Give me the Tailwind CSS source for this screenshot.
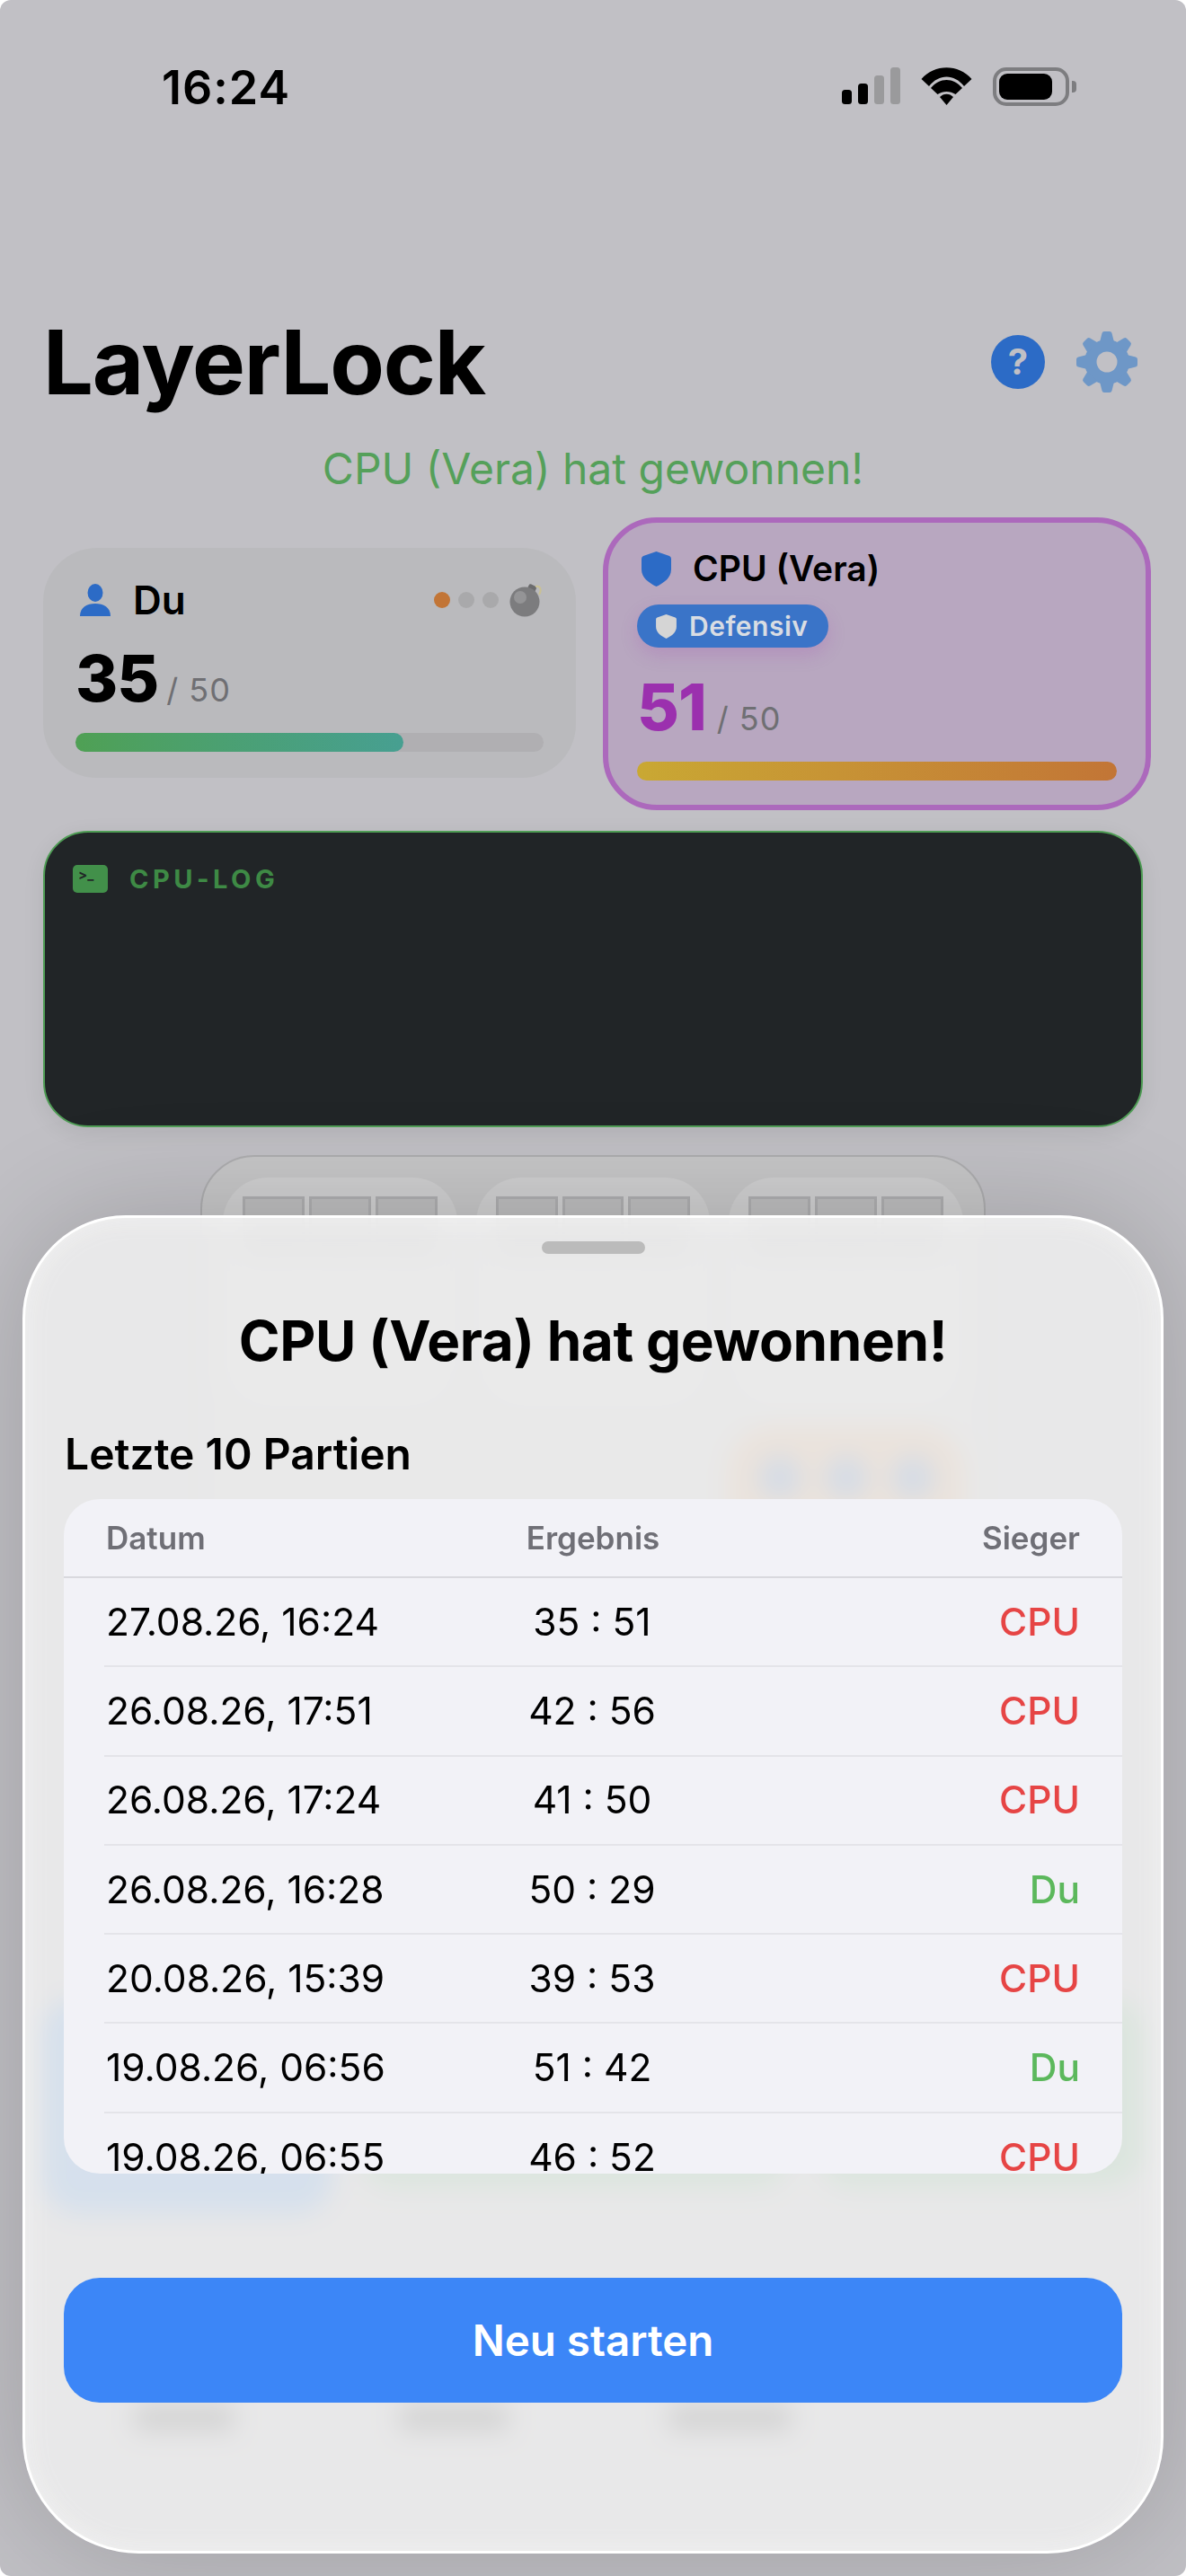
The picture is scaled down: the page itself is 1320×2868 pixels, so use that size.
<!DOCTYPE html>
<html lang="de">
<head>
    <meta charset="UTF-8">
    <meta name="viewport" content="width=device-width, initial-scale=1.0">
    <script src="https://cdn.jsdelivr.net/npm/@tailwindcss/browser@4"></script>
    <title>LayerLock</title>
</head>
<body class="bg-white">
<div class="relative w-[1320px] h-[2868px] overflow-hidden rounded-[12px] bg-[#c1c0c5] text-black [font-family:Inter,sans-serif]">

    <!-- status bar -->
    <div class="flex items-start justify-between pl-[180px] pr-[122px] pt-[72px]">
        <div class="text-[52px] leading-[52px] font-semibold tracking-[1px]">16:24</div>
        <div class="flex items-start gap-[23px] pt-[3px]">
            <svg width="65" height="42" viewBox="0 0 65 42">
                <rect x="0" y="25" width="11" height="16" rx="3.5" fill="#000"/>
                <rect x="18" y="18" width="11" height="23" rx="3.5" fill="#000"/>
                <rect x="36" y="9" width="11" height="32" rx="3.5" fill="#9a9a9c"/>
                <rect x="54" y="0" width="11" height="41" rx="3.5" fill="#9a9a9c"/>
            </svg>
            <svg width="57" height="42" viewBox="0 0 57 42" fill="#000">
                <path d="M0.5 13C15 -4 42 -4 56.5 13L48 21C37 7 20 7 9 21Z"/>
                <path d="M11 23C21 11 36 11 46 23L38.5 30C32 26 25 26 18.5 30Z"/>
                <path d="M21 33C25 28.5 32 28.5 36 33L28.5 42Z"/>
            </svg>
            <div class="flex items-center gap-[3px]">
                <div class="w-[85px] h-[43px] rounded-[15px] border-[4px] border-[#7d7d80] p-[3px]">
                    <div class="w-[59px] h-[29px] rounded-[9px] bg-black"></div>
                </div>
                <div class="w-[5px] h-[13px] rounded-r-[4px] bg-[#7d7d80]"></div>
            </div>
        </div>
    </div>

    <!-- header -->
    <div class="flex items-center justify-between pl-[48px] pr-[54px] mt-[229px]">
        <h1 class="text-[99px] leading-[100px] font-bold tracking-[-1.2px]">LayerLock</h1>
        <div class="flex items-center gap-[35px]">
            <div class="w-[60px] h-[60px] rounded-full bg-[#2c6bc6] flex items-center justify-center text-[#c1c0c5] text-[40px] font-bold">?</div>
            <svg width="68" height="68" viewBox="0 0 68 68" fill="#6e97c7">
                <circle cx="34" cy="34" r="25"/>
                <path d="M26 12L28.5 2Q29 0 31 0H37Q39 0 39.5 2L42 12Z"/>
                <path transform="rotate(45 34 34)" d="M26 12L28.5 2Q29 0 31 0H37Q39 0 39.5 2L42 12Z"/>
                <path transform="rotate(90 34 34)" d="M26 12L28.5 2Q29 0 31 0H37Q39 0 39.5 2L42 12Z"/>
                <path transform="rotate(135 34 34)" d="M26 12L28.5 2Q29 0 31 0H37Q39 0 39.5 2L42 12Z"/>
                <path transform="rotate(180 34 34)" d="M26 12L28.5 2Q29 0 31 0H37Q39 0 39.5 2L42 12Z"/>
                <path transform="rotate(225 34 34)" d="M26 12L28.5 2Q29 0 31 0H37Q39 0 39.5 2L42 12Z"/>
                <path transform="rotate(270 34 34)" d="M26 12L28.5 2Q29 0 31 0H37Q39 0 39.5 2L42 12Z"/>
                <path transform="rotate(315 34 34)" d="M26 12L28.5 2Q29 0 31 0H37Q39 0 39.5 2L42 12Z"/>
                <circle cx="34" cy="34" r="11.5" fill="#c1c0c5"/>
            </svg>
        </div>
    </div>

    <div class="mt-[40px] text-center text-[48px] leading-[58px] text-[#55a05a]">CPU (Vera) hat gewonnen!</div>

    <!-- player cards -->
    <div class="flex items-start gap-[30px] pl-[48px] mt-[25px]">
        <div class="shrink-0 w-[593px] h-[256px] mt-[34px] rounded-[60px] bg-[#bababd] px-[36px] pt-[36px]">
            <div class="flex items-center h-[44px]">
                <svg width="34" height="36" viewBox="0 0 34 36" fill="#2c6bc6" class="ml-[5px]">
                    <ellipse cx="17" cy="10" rx="8.5" ry="10"/>
                    <path d="M0 36C0 26 8 22 17 22S34 26 34 36Z"/>
                </svg>
                <span class="ml-[25px] text-[44px] font-semibold">Du</span>
                <div class="ml-auto flex items-center gap-[9px]">
                    <span class="w-[18px] h-[18px] rounded-full bg-[#c27536]"></span>
                    <span class="w-[18px] h-[18px] rounded-full bg-[#a9a9ab]"></span>
                    <span class="w-[18px] h-[18px] rounded-full bg-[#a9a9ab]"></span>
                    <svg width="38" height="38" viewBox="0 0 38 38" class="ml-[3px]">
                        <rect x="20" y="2" width="9" height="10" rx="2" fill="#6b6b6d" transform="rotate(25 24 7)"/>
                        <circle cx="17" cy="21" r="16.5" fill="#7c7c7e"/>
                        <circle cx="12" cy="16" r="7" fill="#949496"/>
                        <path d="M29 4C35 3 36 8 33 13" fill="none" stroke="#c9c194" stroke-width="2"/>
                    </svg>
                </div>
            </div>
            <div class="flex items-baseline mt-[29px] h-[72px]">
                <span class="text-[72px] leading-[72px] font-extrabold tracking-[-1px]">35</span>
                <span class="ml-[9px] text-[36px] text-[#6f6f73] tracking-[1px]">/ 50</span>
            </div>
            <div class="mt-[25px] h-[21px] rounded-full bg-[#b0afb2]">
                <div class="h-full w-[70%] rounded-full bg-linear-to-r from-[#4fa054] to-[#479f91]"></div>
            </div>
        </div>

        <div class="shrink-0 w-[610px] h-[326px] rounded-[60px] border-[6px] border-[#ac69bc] bg-[#b8a7c0] px-[32px] pt-[31px]">
            <div class="flex items-center h-[40px]">
                <svg width="33" height="39" viewBox="0 0 33 39" fill="#2c6bc6" class="ml-[5px]">
                    <path d="M16.5 0L31 5Q33 6 33 8V20C33 29 25 35 16.5 39C8 35 0 29 0 20V8Q0 6 2 5Z"/>
                </svg>
                <span class="ml-[24px] text-[39px] font-semibold">CPU (Vera)</span>
            </div>
            <div class="mt-[20px] w-[213px] h-[48px] rounded-full bg-[#3a74c8] shadow-[0_8px_20px_rgba(155,48,174,0.18)] flex items-center pl-[21px]">
                <svg width="23" height="27" viewBox="0 0 33 39" fill="#d5d5d5">
                    <path d="M16.5 0L31 5Q33 6 33 8V20C33 29 25 35 16.5 39C8 35 0 29 0 20V8Q0 6 2 5Z"/>
                </svg>
                <span class="ml-[14px] text-[30px] font-semibold text-[#d9dde3] tracking-[0.5px]">Defensiv</span>
            </div>
            <div class="flex items-baseline mt-[30px] h-[72px]">
                <span class="text-[72px] leading-[72px] font-extrabold text-[#9b30ae] tracking-[-1px]">51</span>
                <span class="ml-[12px] text-[36px] text-[#6f6f73] tracking-[1px]">/ 50</span>
            </div>
            <div class="mt-[25px] h-[21px] rounded-full bg-linear-to-r from-[#c9a833] to-[#c27536]"></div>
        </div>
    </div>

    <!-- cpu log -->
    <div class="ml-[48px] mt-[23px] w-[1224px] h-[330px] rounded-[50px] border-[2px] border-[#4f9d55] bg-[#212527] pl-[31px] pt-[30px] shadow-[0_6px_24px_rgba(0,0,0,0.08)]">
        <div class="flex items-center gap-[24px]">
            <div class="w-[39px] h-[31px] rounded-[5px] bg-[#42904a] pl-[6px] pt-[1px] text-[#212527] text-[15px] leading-[20px] font-bold">&gt;_</div>
            <span class="text-[29px] font-bold tracking-[4.5px] text-[#3e8a45]">CPU-LOG</span>
        </div>
    </div>

    <!-- game board, under the sheet -->
    <div class="ml-[223px] mt-[31px] w-[874px] rounded-[60px] border-[2px] border-[#adadaf] bg-[#c6c6c7] p-[23px]">
        <div class="grid grid-cols-3 gap-x-[21px] gap-y-[20px]">
            <div class="h-[258px] rounded-[50px] bg-[#cfcfd0] px-[22px] pt-[21px] grid grid-cols-3 gap-[5px] content-start">
                <div class="h-[69px] border-[3px] border-[#aeaeb0] bg-[#bdbdbe]"></div><div class="h-[69px] border-[3px] border-[#aeaeb0] bg-[#bdbdbe]"></div><div class="h-[69px] border-[3px] border-[#aeaeb0] bg-[#bdbdbe]"></div>
            </div>
            <div class="h-[258px] rounded-[50px] bg-[#cfcfd0] px-[22px] pt-[21px] grid grid-cols-3 gap-[5px] content-start">
                <div class="h-[69px] border-[3px] border-[#aeaeb0] bg-[#bdbdbe]"></div><div class="h-[69px] border-[3px] border-[#aeaeb0] bg-[#bdbdbe]"></div><div class="h-[69px] border-[3px] border-[#aeaeb0] bg-[#bdbdbe]"></div>
            </div>
            <div class="h-[258px] rounded-[50px] bg-[#cfcfd0] px-[22px] pt-[21px] grid grid-cols-3 gap-[5px] content-start">
                <div class="h-[69px] border-[3px] border-[#aeaeb0] bg-[#bdbdbe]"></div><div class="h-[69px] border-[3px] border-[#aeaeb0] bg-[#bdbdbe]"></div><div class="h-[69px] border-[3px] border-[#aeaeb0] bg-[#bdbdbe]"></div>
            </div>
            <div class="h-[258px]"></div>
            <div class="h-[258px]"></div>
            <div class="h-[258px] rounded-[50px] bg-[#d5a071] px-[22px] pt-[21px] grid grid-cols-3 gap-[5px] content-start">
                <div class="h-[69px] flex items-center justify-center"><span class="w-[48px] h-[48px] rounded-full bg-[#4371b4]"></span></div>
                <div class="h-[69px] flex items-center justify-center"><span class="w-[48px] h-[48px] rounded-full bg-[#4371b4]"></span></div>
                <div class="h-[69px] flex items-center justify-center"><span class="w-[48px] h-[48px] rounded-full bg-[#4371b4]"></span></div>
            </div>
        </div>
    </div>

    <!-- buttons and tab labels, under the sheet -->
    <div class="flex gap-[30px] px-[48px] mt-[353px]">
        <div class="w-[322px] h-[240px] rounded-[40px] bg-[#4a8fe0]"></div>
        <div class="w-[480px] h-[210px] rounded-[40px] bg-[#6fb080]"></div>
        <div class="w-[362px] h-[210px] rounded-[40px] bg-[#6fb080]"></div>
    </div>
    <div class="relative h-[30px] mt-[213px]">
        <div class="absolute left-[150px] top-[0px] w-[110px] h-[28px] bg-[#333]"></div>
        <div class="absolute left-[445px] top-[0px] w-[120px] h-[28px] bg-[#333]"></div>
        <div class="absolute left-[745px] top-[0px] w-[135px] h-[28px] bg-[#333]"></div>
    </div>

    <!-- result sheet -->
    <div class="absolute left-[25px] top-[1353px] w-[1270px] h-[1490px] rounded-t-[115px] rounded-b-[130px] border-[3px] border-white bg-[#eeeeef]/85 backdrop-blur-[14px] shadow-[0_0_130px_rgba(0,0,0,0.18),inset_0_0_30px_rgba(255,255,255,0.4)] px-[43px] flex flex-col">
        <div class="mx-auto mt-[26px] w-[115px] h-[14px] rounded-full bg-[#bbbbbb]"></div>
        <h2 class="mt-[60px] text-center text-[62px] leading-[74px] font-bold tracking-[-0.4px]">CPU (Vera) hat gewonnen!</h2>
        <h3 class="mt-[61px] pl-[1px] text-[48px] leading-[56px] font-semibold">Letzte 10 Partien</h3>
        <div class="mt-[22px] h-[751px] overflow-hidden rounded-[40px] bg-[#f2f2f7]">
            <div class="h-[88px] grid grid-cols-3 items-center px-[47px] border-b-[2px] border-[#d9d9de] text-[35px] font-semibold text-[#6f6f76]">
                <span>Datum</span><span class="text-center">Ergebnis</span><span class="text-right">Sieger</span>
            </div>
            <div class="ml-[45px] h-[99.3px] grid grid-cols-3 items-center pl-[2px] pr-[47px] border-b-[2px] border-[#e4e4e9] text-[42.5px]">
                <span>27.08.26, 16:24</span><span class="text-center -ml-[2px]">35 : 51</span><span class="text-right font-medium text-[#e64545]">CPU</span>
            </div>
            <div class="ml-[45px] h-[99.3px] grid grid-cols-3 items-center pl-[2px] pr-[47px] border-b-[2px] border-[#e4e4e9] text-[42.5px]">
                <span>26.08.26, 17:51</span><span class="text-center -ml-[2px]">42 : 56</span><span class="text-right font-medium text-[#e64545]">CPU</span>
            </div>
            <div class="ml-[45px] h-[99.3px] grid grid-cols-3 items-center pl-[2px] pr-[47px] border-b-[2px] border-[#e4e4e9] text-[42.5px]">
                <span>26.08.26, 17:24</span><span class="text-center -ml-[2px]">41 : 50</span><span class="text-right font-medium text-[#e64545]">CPU</span>
            </div>
            <div class="ml-[45px] h-[99.3px] grid grid-cols-3 items-center pl-[2px] pr-[47px] border-b-[2px] border-[#e4e4e9] text-[42.5px]">
                <span>26.08.26, 16:28</span><span class="text-center -ml-[2px]">50 : 29</span><span class="text-right font-medium text-[#5cb85c]">Du</span>
            </div>
            <div class="ml-[45px] h-[99.3px] grid grid-cols-3 items-center pl-[2px] pr-[47px] border-b-[2px] border-[#e4e4e9] text-[42.5px]">
                <span>20.08.26, 15:39</span><span class="text-center -ml-[2px]">39 : 53</span><span class="text-right font-medium text-[#e64545]">CPU</span>
            </div>
            <div class="ml-[45px] h-[99.3px] grid grid-cols-3 items-center pl-[2px] pr-[47px] border-b-[2px] border-[#e4e4e9] text-[42.5px]">
                <span>19.08.26, 06:56</span><span class="text-center -ml-[2px]">51 : 42</span><span class="text-right font-medium text-[#5cb85c]">Du</span>
            </div>
            <div class="ml-[45px] h-[99.3px] grid grid-cols-3 items-center pl-[2px] pr-[47px] border-b-[2px] border-[#e4e4e9] text-[42.5px]">
                <span>19.08.26, 06:55</span><span class="text-center -ml-[2px]">46 : 52</span><span class="text-right font-medium text-[#e64545]">CPU</span>
            </div>
        </div>
        <button class="mt-[116px] h-[139px] rounded-[40px] bg-[#3c86f7] text-white text-[47.5px] font-semibold">Neu starten</button>
    </div>
</div>
</body>
</html>
